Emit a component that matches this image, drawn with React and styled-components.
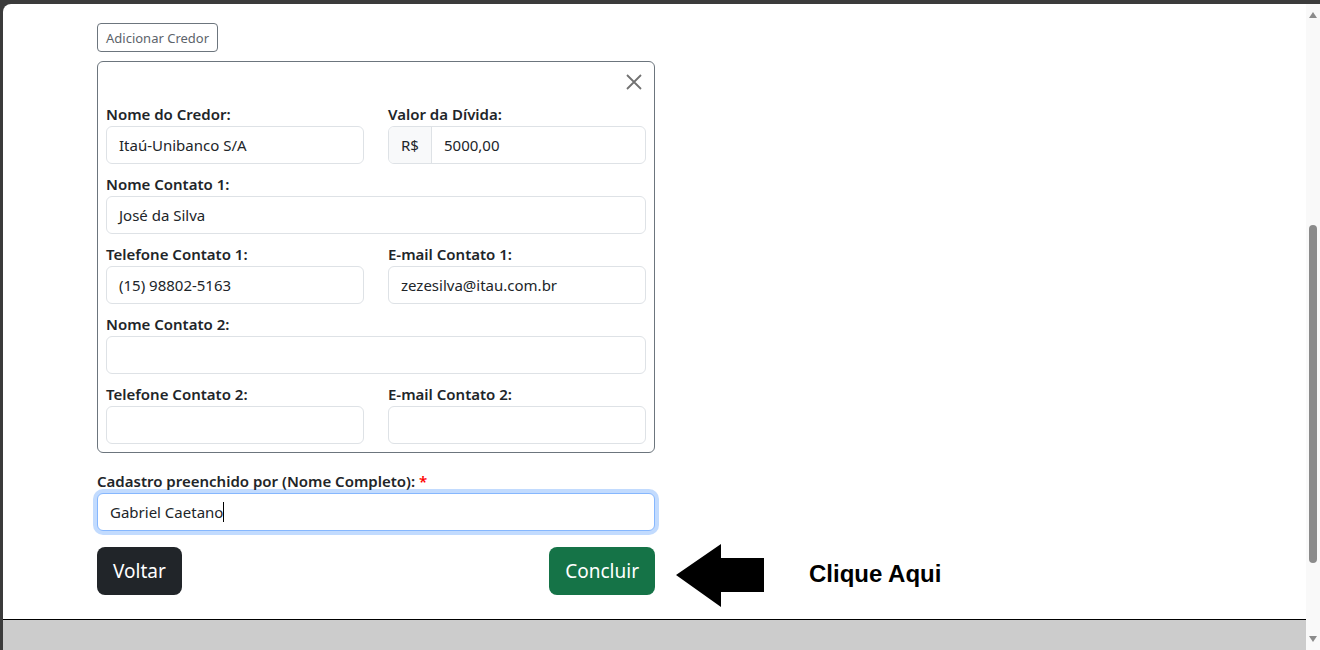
import React from 'react';
import styled, { createGlobalStyle } from 'styled-components';

const GlobalStyle = createGlobalStyle`
  html,
  body {
    margin: 0;
    padding: 0;
    height: 100%;
    overflow: hidden;
    background: #3b3b3b;
  }

  body {
    font-family: 'Noto Sans', 'Open Sans', sans-serif;
    color: #212529;
  }
`;

let Frame = styled.div`
  height: 650px;
  box-sizing: border-box;
  padding: 4px 0 0 3px;
  background: #3b3b3b;
  display: flex;
`;

let Viewport = styled.div`
  flex: 1;
  display: flex;
  background: white;
  border-top-left-radius: 8px;
  overflow: hidden;
`;

let Page = styled.div`
  flex: 1;
  display: flex;
  flex-direction: column;
`;

let Content = styled.div`
  flex: 1;
  padding: 19px 0 0 94px;
`;

let Footer = styled.div`
  height: 30px;
  border-top: 1px solid #000;
  background: #cccccc;
`;

let Scrollbar = styled.div`
  width: 14px;
  background: #f9f9f9;
  display: flex;
  flex-direction: column;
  align-items: center;
`;

let ScrollArrow = styled.div`
  height: 22px;
  display: flex;
  align-items: center;
  justify-content: center;
`;

let Track = styled.div`
  flex: 1;
  display: flex;
  flex-direction: column;
  align-items: center;
`;

let Thumb = styled.div`
  width: 8px;
  height: 338px;
  margin-top: 199px;
  border-radius: 4px;
  background: #8b8b8b;
`;

let OutlineButton = styled.button`
  height: 29px;
  padding: 0 8px;
  font-family: inherit;
  font-size: 13px;
  color: #5c636a;
  background: white;
  border: 1px solid #6c757d;
  border-radius: 4px;
`;

let CreditorCard = styled.div`
  width: 558px;
  box-sizing: border-box;
  margin-top: 9px;
  padding: 8px;
  border: 1px solid #6c757d;
  border-radius: 6px;
`;

let CardTop = styled.div`
  display: flex;
  justify-content: flex-end;
  margin-bottom: 8px;
`;

let CloseButton = styled.button`
  width: 24px;
  height: 24px;
  padding: 0;
  border: none;
  background: none;
  display: flex;
  align-items: center;
  justify-content: center;
`;

let FieldsGrid = styled.div`
  display: grid;
  grid-template-columns: 1fr 1fr;
  column-gap: 24px;
  row-gap: 8px;
`;

let FieldGroup = styled.div`
  grid-column: span ${(p) => (p.$full ? 2 : 1)};
`;

let Label = styled.div`
  font-size: 15px;
  font-weight: 600;
  line-height: 24px;
  color: #212529;
`;

let Required = styled.span`
  color: red;
`;

let InputBox = styled.div`
  height: 38px;
  box-sizing: border-box;
  display: flex;
  align-items: center;
  padding: 0 12px;
  font-size: 15px;
  background: white;
  border: 1px solid ${(p) => (p.$focused ? '#86b7fe' : '#dee2e6')};
  border-radius: 6px;
  box-shadow: ${(p) => (p.$focused ? '0 0 0 4px rgba(13, 110, 253, 0.25)' : 'none')};
`;

let Caret = styled.span`
  width: 1px;
  height: 20px;
  background: #000;
`;

let InputGroup = styled.div`
  display: flex;
  height: 38px;
  box-sizing: border-box;
  border: 1px solid #dee2e6;
  border-radius: 6px;
  overflow: hidden;
  font-size: 15px;
`;

let Addon = styled.div`
  width: 42px;
  display: flex;
  align-items: center;
  justify-content: center;
  background: #f8f9fa;
  border-right: 1px solid #dee2e6;
`;

let AddonValue = styled.div`
  flex: 1;
  display: flex;
  align-items: center;
  padding: 0 12px;
`;

let SignerBlock = styled.div`
  width: 558px;
  margin-top: 16px;
`;

let ActionRow = styled.div`
  display: flex;
  align-items: flex-start;
  margin-top: 16px;
`;

let ButtonsBar = styled.div`
  width: 558px;
  display: flex;
  justify-content: space-between;
`;

let LargeButton = styled.button`
  height: 48px;
  padding: 0 16px;
  font-family: inherit;
  font-size: 19px;
  color: white;
  background: ${(p) => p.$bg};
  border: none;
  border-radius: 8px;
`;

let Callout = styled.div`
  display: flex;
  align-items: center;
  gap: 45px;
  height: 63px;
  margin: -3px 0 0 21px;
`;

let CalloutText = styled.span`
  font-family: 'Liberation Sans', Arial, sans-serif;
  font-weight: bold;
  font-size: 24px;
  color: #000;
  margin-top: -3px;
`;

function Field({ label, value, full }) {
  return (
    <FieldGroup $full={full}>
      <Label>{label}</Label>
      <InputBox>{value}</InputBox>
    </FieldGroup>
  );
}

function App() {
  return (
    <>
      <GlobalStyle />
      <Frame>
        <Viewport>
          <Page>
            <Content>
              <OutlineButton>Adicionar Credor</OutlineButton>

              <CreditorCard>
                <CardTop>
                  <CloseButton aria-label="Fechar">
                    <svg width="16" height="16" viewBox="0 0 16 16">
                      <path
                        d="M1 1 L15 15 M15 1 L1 15"
                        stroke="#727272"
                        strokeWidth="1.8"
                        fill="none"
                      />
                    </svg>
                  </CloseButton>
                </CardTop>

                <FieldsGrid>
                  <Field label="Nome do Credor:" value="Itaú-Unibanco S/A" />
                  <FieldGroup>
                    <Label>Valor da Dívida:</Label>
                    <InputGroup>
                      <Addon>R$</Addon>
                      <AddonValue>5000,00</AddonValue>
                    </InputGroup>
                  </FieldGroup>
                  <Field label="Nome Contato 1:" value="José da Silva" full />
                  <Field label="Telefone Contato 1:" value="(15) 98802-5163" />
                  <Field label="E-mail Contato 1:" value="zezesilva@itau.com.br" />
                  <Field label="Nome Contato 2:" value="" full />
                  <Field label="Telefone Contato 2:" value="" />
                  <Field label="E-mail Contato 2:" value="" />
                </FieldsGrid>
              </CreditorCard>

              <SignerBlock>
                <Label>
                  Cadastro preenchido por (Nome Completo): <Required>*</Required>
                </Label>
                <InputBox $focused>
                  Gabriel Caetano
                  <Caret />
                </InputBox>
              </SignerBlock>

              <ActionRow>
                <ButtonsBar>
                  <LargeButton $bg="#212529">Voltar</LargeButton>
                  <LargeButton $bg="#157347">Concluir</LargeButton>
                </ButtonsBar>
                <Callout>
                  <svg width="88" height="63" viewBox="0 0 88 63">
                    <path d="M0 31 L45 0 L45 14 L88 14 L88 48 L45 48 L45 63 Z" fill="#000" />
                  </svg>
                  <CalloutText>Clique Aqui</CalloutText>
                </Callout>
              </ActionRow>
            </Content>
            <Footer />
          </Page>

          <Scrollbar>
            <ScrollArrow>
              <svg width="8" height="6" viewBox="0 0 8 6">
                <path d="M0 6 L4 0 L8 6 Z" fill="#8b8b8b" />
              </svg>
            </ScrollArrow>
            <Track>
              <Thumb />
            </Track>
            <ScrollArrow>
              <svg width="8" height="6" viewBox="0 0 8 6">
                <path d="M0 0 L8 0 L4 6 Z" fill="#8b8b8b" />
              </svg>
            </ScrollArrow>
          </Scrollbar>
        </Viewport>
      </Frame>
    </>
  );
}

export default App;
